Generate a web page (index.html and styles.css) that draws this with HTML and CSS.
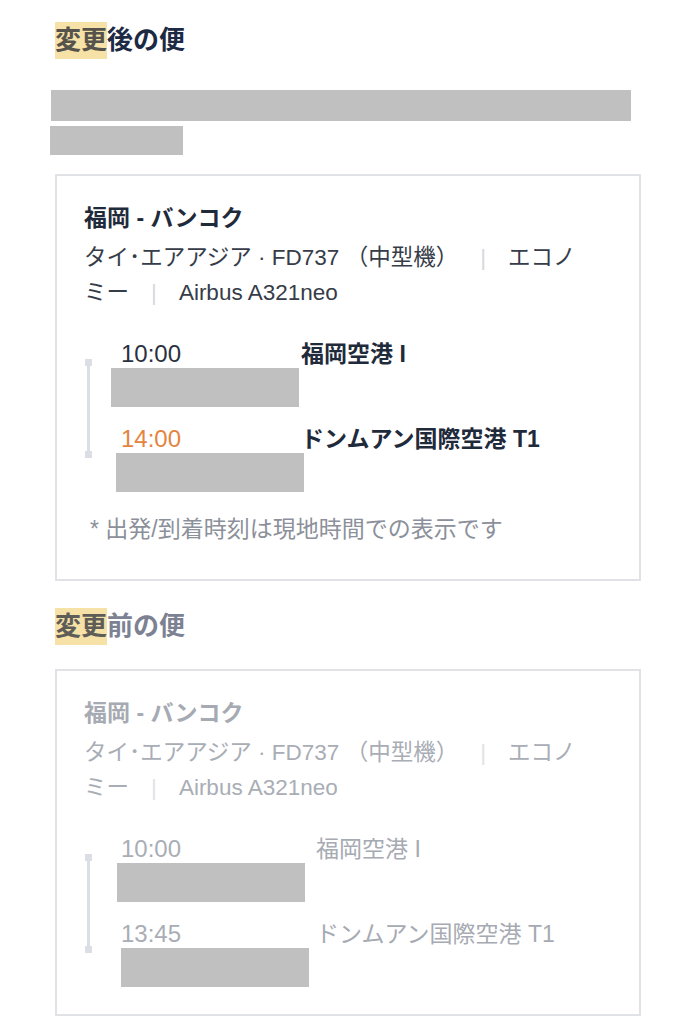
FILE: index.html
```html
<!DOCTYPE html>
<html lang="ja">
<head>
    <meta charset="UTF-8">
    <meta name="viewport" content="width=device-width, initial-scale=1.0">
    <title>便の変更</title>
    <link rel="stylesheet" href="styles.css">
</head>
<body>

    <div class="page">
        <!-- New flight -->
        <h2 class="section-title"><mark>変更</mark>後の便</h2>
        <div class="redact redact-wide"></div>
        <div class="redact redact-narrow"></div>

        <div class="card">
            <p class="route">福岡 - バンコク</p>
            <p class="info">タイ･エアアジア · FD737 （中型機）<span class="sep">|</span>エコノ<br>ミー<span class="sep">|</span>Airbus A321neo</p>

            <div class="timeline">
                <div class="track">
                    <span class="cap"></span>
                    <span class="line"></span>
                    <span class="cap"></span>
                </div>
                <div class="stops">
                    <div class="stop">
                        <div class="time-col">
                            <span class="time">10:00</span>
                            <div class="redact redact-date"></div>
                        </div>
                        <div class="airport">福岡空港 I</div>
                    </div>
                    <div class="stop">
                        <div class="time-col">
                            <span class="time time-late">14:00</span>
                            <div class="redact redact-date shift-1"></div>
                        </div>
                        <div class="airport">ドンムアン国際空港 T1</div>
                    </div>
                </div>
            </div>

            <p class="note">* 出発/到着時刻は現地時間での表示です</p>
        </div>

        <!-- Old flight -->
        <h2 class="section-title section-title-old"><mark>変更</mark>前の便</h2>

        <div class="card card-old">
            <p class="route">福岡 - バンコク</p>
            <p class="info">タイ･エアアジア · FD737 （中型機）<span class="sep">|</span>エコノ<br>ミー<span class="sep">|</span>Airbus A321neo</p>

            <div class="timeline">
                <div class="track">
                    <span class="cap"></span>
                    <span class="line"></span>
                    <span class="cap"></span>
                </div>
                <div class="stops">
                    <div class="stop">
                        <div class="time-col">
                            <span class="time">10:00</span>
                            <div class="redact redact-date shift-2"></div>
                        </div>
                        <div class="airport">福岡空港 I</div>
                    </div>
                    <div class="stop">
                        <div class="time-col">
                            <span class="time">13:45</span>
                            <div class="redact redact-date shift-3"></div>
                        </div>
                        <div class="airport">ドンムアン国際空港 T1</div>
                    </div>
                </div>
            </div>
        </div>
    </div>

</body>
</html>
```

FILE: styles.css
```css
body {
    font-family: "Liberation Sans", "Noto Sans CJK JP", sans-serif;
    background-color: #fff;
    margin: 0;
    padding: 0;
    color: #222b3a;
}

.page {
    padding: 22px 55px 0;
}

.section-title {
    font-size: 26px;
    line-height: 37px;
    font-weight: 700;
    margin: 0;
    color: #1d2a44;
}

.section-title mark {
    display: inline-block;
    background-color: #f6e1a6;
    color: #55534c;
}

.section-title-old {
    margin-top: 27px;
    color: #7c8292;
}

.section-title-old mark {
    color: #5f5d57;
}

/* blanked-out areas */
.redact {
    background-color: #c0c0c0;
}

.redact-wide {
    width: 580px;
    height: 31px;
    margin: 31px 0 0 -4px;
}

.redact-narrow {
    width: 133px;
    height: 29px;
    margin: 5px 0 0 -5px;
}

.redact-date {
    width: 188px;
    height: 39px;
}

.shift-1 {
    margin-left: 5px;
}

.shift-2 {
    margin-left: 6px;
}

.shift-3 {
    margin-left: 10px;
}

.card {
    margin-top: 19px;
    border: 2px solid #e1e2e6;
    padding: 26px 27px 34px;
}

.card-old {
    margin-top: 24px;
    padding-bottom: 27px;
}

.route {
    margin: 0;
    font-size: 23px;
    line-height: 32px;
    font-weight: 700;
    color: #1f2a3b;
}

.info {
    margin: 6px 0 0;
    font-size: 22.5px;
    line-height: 35px;
    color: #363c48;
}

.sep {
    margin: 0 22px;
    color: #d5d8dd;
}

.timeline {
    display: flex;
    margin-top: 30px;
}

.track {
    display: flex;
    flex-direction: column;
    align-items: center;
    width: 7px;
    height: 99px;
    margin: 19px 0 0 1px;
}

.track .cap {
    width: 7px;
    height: 7px;
    background-color: #dcdee6;
}

.track .line {
    flex: 1;
    width: 3px;
    background-color: #dcdee6;
}

.stops {
    flex: 1;
    margin-left: 19px;
}

.stop {
    display: flex;
}

.stop + .stop {
    margin-top: 18px;
}

.time-col {
    width: 190px;
}

.card-old .time-col {
    width: 205px;
}

.time {
    display: block;
    padding-left: 10px;
    font-size: 24px;
    line-height: 28px;
    color: #2a3140;
}

.time-late {
    color: #e4843f;
}

.airport {
    font-size: 23px;
    line-height: 28px;
    font-weight: 700;
    color: #1f2a3b;
}

.note {
    margin: 21px 0 0 6px;
    font-size: 23px;
    line-height: 32px;
    color: #8b909a;
}

/* greyed-out old flight */
.card-old .route {
    color: #a6aab2;
}

.card-old .info,
.card-old .time {
    color: #a9adb5;
}

.card-old .sep {
    color: #e0e2e6;
}

.card-old .airport {
    font-weight: 400;
    color: #a6aab2;
}
```
